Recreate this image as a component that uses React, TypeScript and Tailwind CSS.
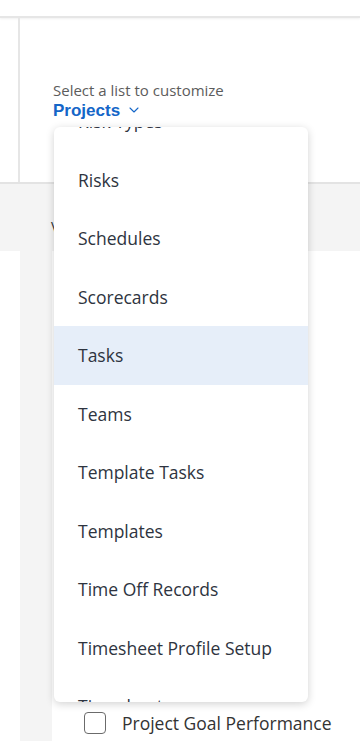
import { ChevronDown } from "lucide-react";

const items = [
  "Risk Types",
  "Risks",
  "Schedules",
  "Scorecards",
  "Tasks",
  "Teams",
  "Template Tasks",
  "Templates",
  "Time Off Records",
  "Timesheet Profile Setup",
  "Timesheets",
];

const App = () => {
  return (
    <div className="relative w-[360px] h-[742px] overflow-hidden bg-white font-['Open_Sans',Arial,sans-serif] text-[#2e3440]">
      <div className="h-[18px] border-b-2 border-[#e6e6e6] shadow-[0_1px_2px_rgba(0,0,0,0.06)]" />

      <div className="flex h-[166px] border-b-2 border-[#e3e3e3]">
        <div className="w-[20px] border-r-2 border-[#e6e6e6]" />
        <div className="flex flex-col pl-[33px] pt-[63px]">
          <span className="text-[15px] leading-[19px] text-[#5c5c5c]">Select a list to customize</span>
          <button className="flex items-center gap-[6px] font-['Liberation_Sans',Arial,sans-serif] text-[17px] leading-[21px] font-bold text-[#1466c8]">
            Projects
            <ChevronDown size={16} strokeWidth={1.6} className="mt-[-2px]" />
          </button>
        </div>
      </div>

      <div className="h-[67px] bg-[#f4f4f4] pl-[51px] pt-[32px] text-[14px] text-[#333]">View</div>

      <div className="flex h-[490px]">
        <div className="w-[20px] bg-white" />
        <div className="w-[32px] bg-[#f4f4f4]" />
        <div className="flex flex-1 flex-col justify-end pb-[5px] pl-[32px]">
          <label className="flex items-center gap-[16px] text-[17.5px] text-[#333]">
            <span className="h-[22px] w-[22px] rounded-[4px] border-[1.5px] border-[#6b6b6b] bg-white" />
            Project Goal Performance
          </label>
        </div>
      </div>

      <div className="absolute left-[54px] top-[127px] h-[575px] w-[254px] overflow-hidden rounded-[6px] bg-white shadow-[0_2px_8px_rgba(0,0,0,0.18)]">
        <ul className="mt-[-35px]">
          {items.map((item) => (
            <li
              key={item}
              className={
                item === "Tasks"
                  ? "flex h-[58.5px] items-center bg-[#e6eef9] pl-[24px] text-[17.5px]"
                  : "flex h-[58.5px] items-center pl-[24px] text-[17.5px]"
              }
            >
              {item}
            </li>
          ))}
        </ul>
      </div>
    </div>
  );
};

export default App;
